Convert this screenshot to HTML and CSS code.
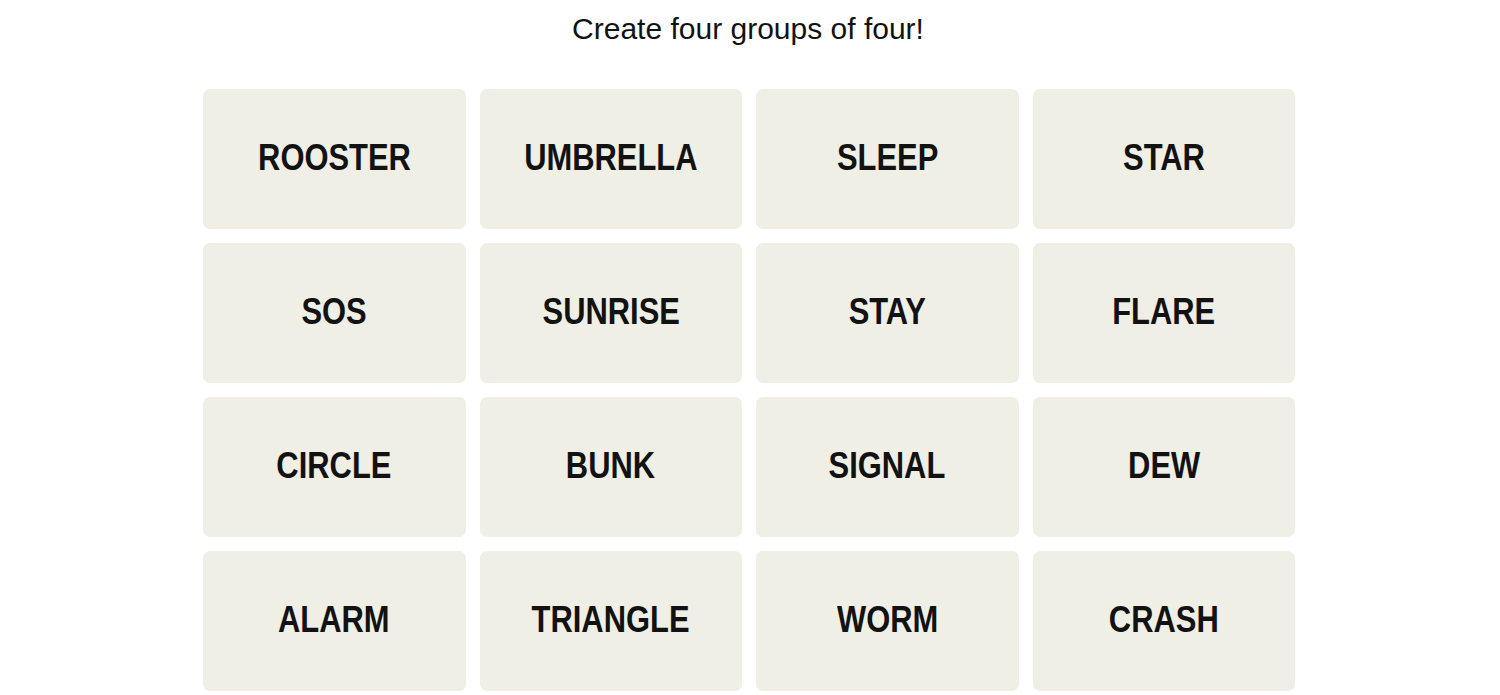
FILE: index.html
```html
<!DOCTYPE html>
<html lang="en">
<head>
<meta charset="utf-8">
<title>Connections</title>
<link rel="stylesheet" href="styles.css">
</head>
<body>
<main class="game">
  <h1 class="prompt">Create four groups of four!</h1>
  <section class="board">
    <button class="tile"><span class="word">ROOSTER</span></button>
    <button class="tile"><span class="word">UMBRELLA</span></button>
    <button class="tile"><span class="word">SLEEP</span></button>
    <button class="tile"><span class="word">STAR</span></button>
    <button class="tile"><span class="word">SOS</span></button>
    <button class="tile"><span class="word">SUNRISE</span></button>
    <button class="tile"><span class="word">STAY</span></button>
    <button class="tile"><span class="word">FLARE</span></button>
    <button class="tile"><span class="word">CIRCLE</span></button>
    <button class="tile"><span class="word">BUNK</span></button>
    <button class="tile"><span class="word">SIGNAL</span></button>
    <button class="tile"><span class="word">DEW</span></button>
    <button class="tile"><span class="word">ALARM</span></button>
    <button class="tile"><span class="word">TRIANGLE</span></button>
    <button class="tile"><span class="word">WORM</span></button>
    <button class="tile"><span class="word">CRASH</span></button>
  </section>
</main>
</body>
</html>
```
FILE: styles.css
```css
html, body {
  margin: 0;
  padding: 0;
  background: #ffffff;
}

body {
  font-family: "Liberation Sans", Arial, sans-serif;
  color: #121212;
}

.game {
  display: flex;
  flex-direction: column;
  align-items: center;
  padding-top: 12px;
}

.prompt {
  margin: 0 4px 43px 0;
  font-size: 30px;
  line-height: 34px;
  font-weight: 400;
  color: #121212;
}

.board {
  display: grid;
  grid-template-columns: repeat(4, 1fr);
  grid-auto-rows: 140px;
  gap: 14px;
  width: 1092px;
  margin-left: -2px;
}

.tile {
  display: flex;
  align-items: center;
  justify-content: center;
  border: none;
  border-radius: 7px;
  background: #efefe6;
  color: #121212;
  font-family: "Liberation Sans", Arial, sans-serif;
  font-weight: 700;
  font-size: 37px;
  padding: 0 0 2px 0;
  margin: 0;
}

.word {
  display: inline-block;
  transform: scaleX(0.835);
  white-space: nowrap;
}
```
